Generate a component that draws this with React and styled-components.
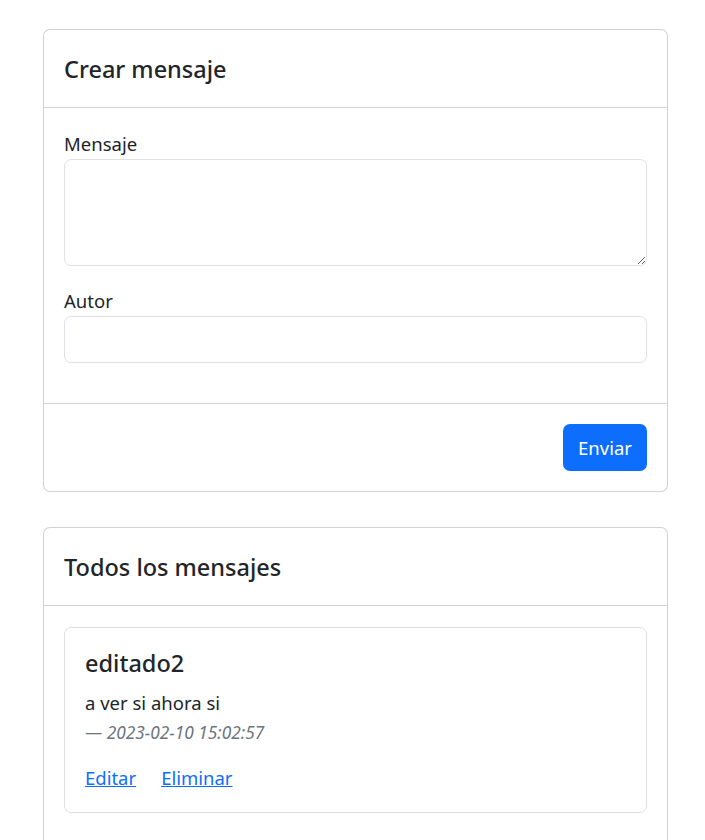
import React from "react";
import styled, { createGlobalStyle } from "styled-components";

const GlobalStyle = createGlobalStyle`
  body {
    margin: 0;
    background: #fff;
    color: #212529;
    font-family: "Noto Sans", "Open Sans", sans-serif;
  }
`;

const Page = styled.div`
  padding: 29px 37px 40px 43px;
  display: flex;
  flex-direction: column;
  gap: 35px;
`;

const Card = styled.section`
  background: #fff;
  border: 1px solid rgba(0, 0, 0, 0.175);
  border-radius: 7px;
`;

const CardHeader = styled.div`
  padding: 24px 20px 23px;
  border-bottom: 1px solid rgba(0, 0, 0, 0.175);
`;

const Title = styled.h5`
  margin: 0;
  font-size: 23.5px;
  line-height: 30px;
  font-weight: 500;
  color: #212529;
`;

const CardBody = styled.div`
  padding: 21px 20px 20px;
`;

const Field = styled.div`
  margin-bottom: 20px;
`;

const Label = styled.label`
  display: block;
  font-size: 18.5px;
  line-height: 30px;
`;

const Area = styled.textarea`
  display: block;
  box-sizing: border-box;
  width: 100%;
  height: 107px;
  padding: 7px 15px;
  border: 1px solid #dee2e6;
  border-radius: 7px;
  font: inherit;
  font-size: 18.5px;
  resize: vertical;
`;

const Input = styled.input`
  display: block;
  box-sizing: border-box;
  width: 100%;
  height: 47px;
  padding: 7px 15px;
  border: 1px solid #dee2e6;
  border-radius: 7px;
  font: inherit;
  font-size: 18.5px;
`;

const CardFooter = styled.div`
  padding: 20px;
  border-top: 1px solid rgba(0, 0, 0, 0.175);
  display: flex;
  justify-content: flex-end;
`;

const Button = styled.button`
  height: 47px;
  padding: 0 15px;
  border: none;
  border-radius: 7px;
  background: #0d6efd;
  color: #fff;
  font-family: inherit;
  font-size: 18.5px;
`;

const Message = styled.article`
  border: 1px solid rgba(0, 0, 0, 0.125);
  border-radius: 7px;
  padding: 20px 20px 19px;
  margin-bottom: 20px;
`;

const MessageTitle = styled(Title)`
  margin-bottom: 10px;
`;

const Text = styled.p`
  margin: 0;
  font-size: 18.5px;
  line-height: 30px;
`;

const Meta = styled.div`
  margin-bottom: 15px;
  font-size: 17.3px;
  line-height: 30px;
  color: #6c757d;

  em {
    font-style: italic;
  }
`;

const Links = styled.div`
  font-size: 18.5px;
  line-height: 30px;
`;

const Link = styled.a`
  color: #0d6efd;
  text-decoration: underline;
  cursor: pointer;

  & + & {
    margin-left: 25px;
  }
`;

const messages = [
  { id: 1, author: "editado2", text: "a ver si ahora si", date: "2023-02-10 15:02:57" },
];

export default function App() {
  return (
    <>
      <GlobalStyle />
      <Page>
        <Card>
          <CardHeader>
            <Title>Crear mensaje</Title>
          </CardHeader>
          <CardBody>
            <Field>
              <Label htmlFor="mensaje">Mensaje</Label>
              <Area id="mensaje" rows={3} />
            </Field>
            <Field>
              <Label htmlFor="autor">Autor</Label>
              <Input id="autor" type="text" />
            </Field>
          </CardBody>
          <CardFooter>
            <Button>Enviar</Button>
          </CardFooter>
        </Card>

        <Card>
          <CardHeader>
            <Title>Todos los mensajes</Title>
          </CardHeader>
          <CardBody>
            {messages.map(m => (
              <Message key={m.id}>
                <MessageTitle>{m.author}</MessageTitle>
                <Text>{m.text}</Text>
                <Meta>— <em>{m.date}</em></Meta>
                <Links>
                  <Link>Editar</Link>
                  <Link>Eliminar</Link>
                </Links>
              </Message>
            ))}
          </CardBody>
        </Card>
      </Page>
    </>
  );
}
